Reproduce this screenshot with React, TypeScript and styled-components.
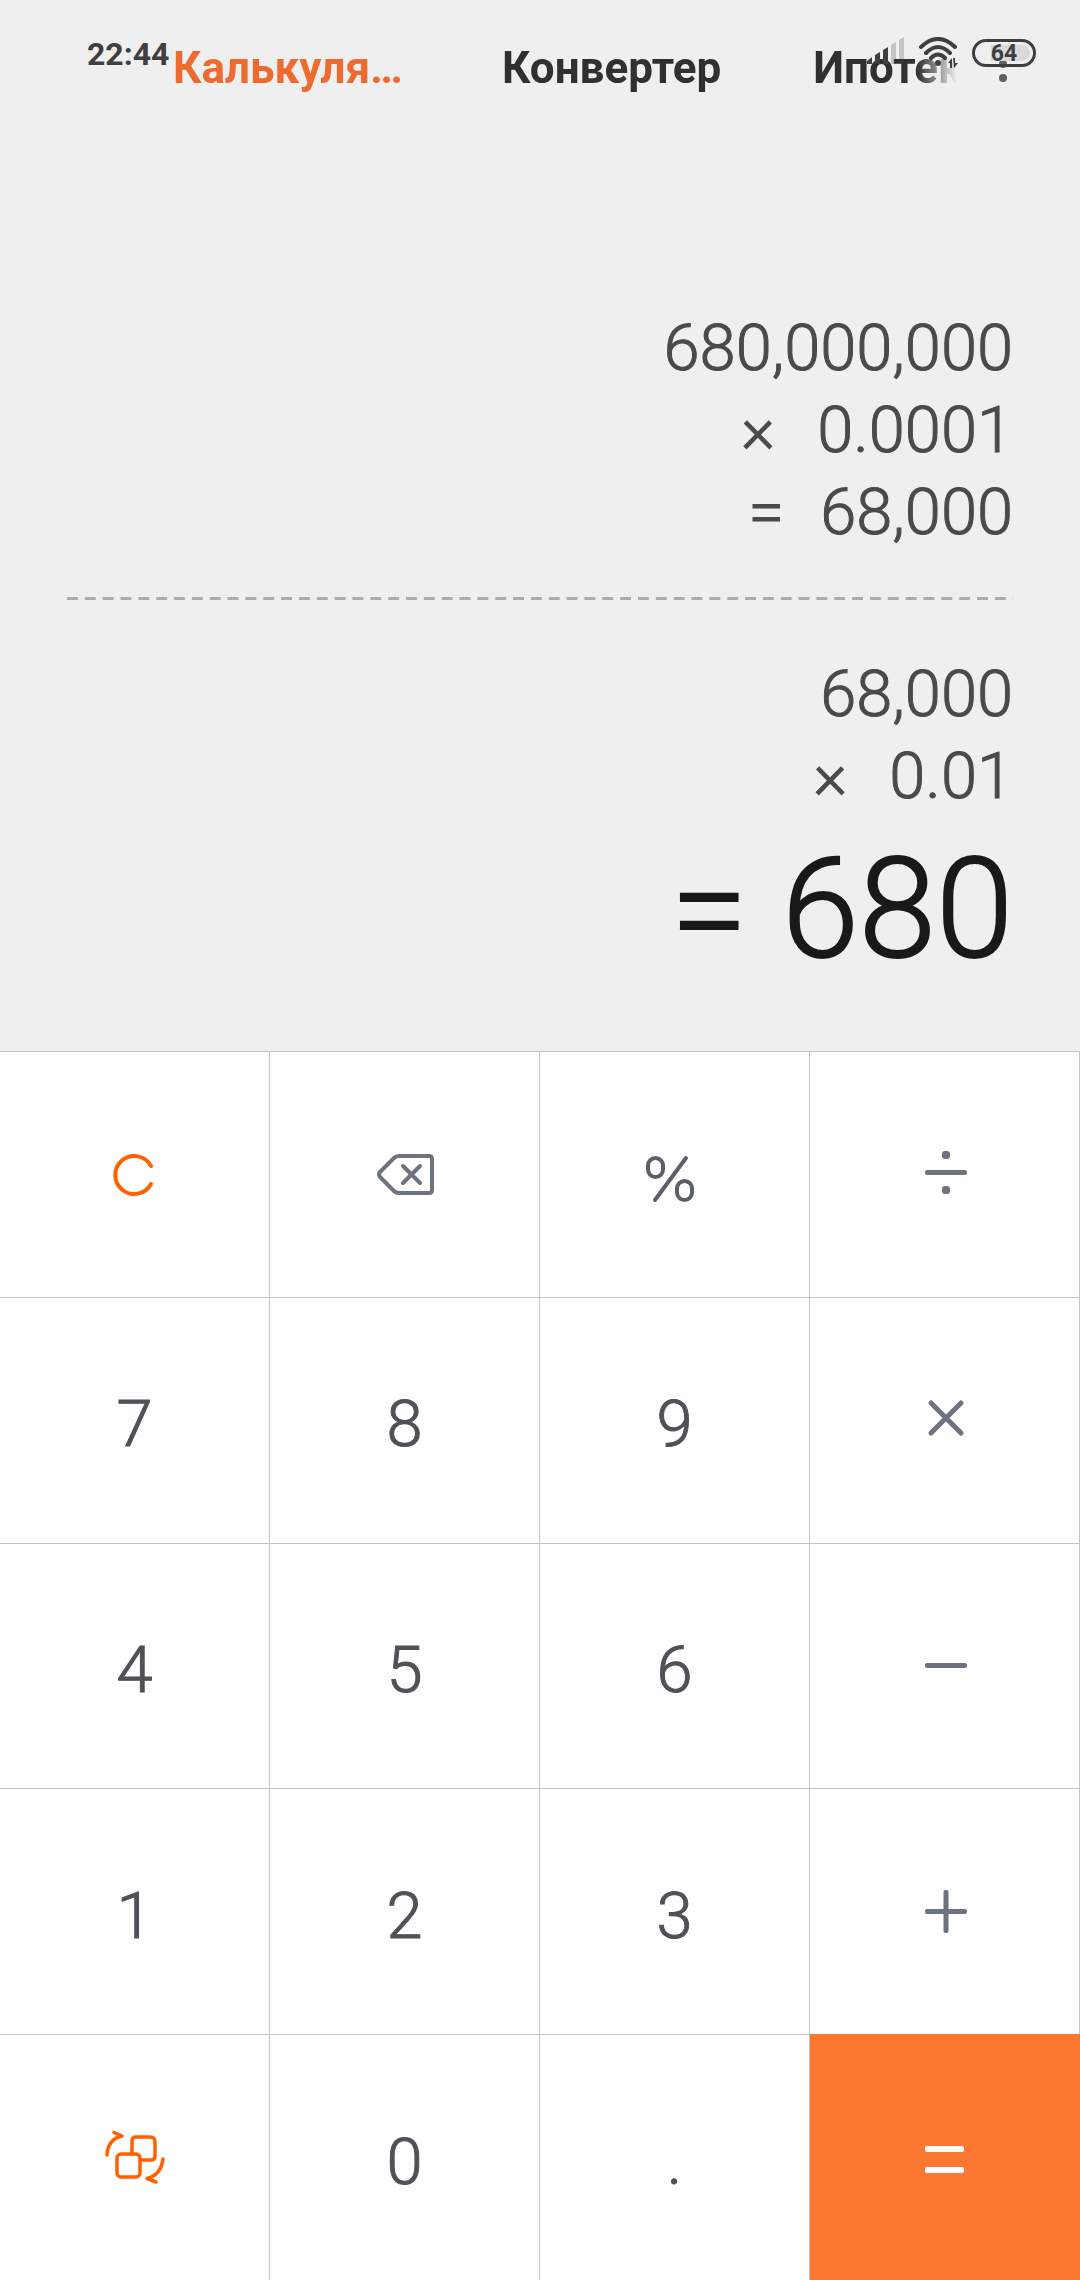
import React from 'react';
import styled, { createGlobalStyle } from 'styled-components';

const GlobalStyle = createGlobalStyle`
  * { box-sizing: border-box; }
  body { margin: 0; background: #efefef; font-family: Roboto, sans-serif; }
`;

const Screen = styled.div`
  position: relative;
  display: flex;
  flex-direction: column;
  min-height: 100vh;
  background: #efefef;
`;

const StatusBar = styled.div`
  position: absolute;
  z-index: 1;
  inset: 0 0 auto 0;
  display: flex;
  align-items: center;
  height: 106px;
  padding: 0 44px 0 87px;
  pointer-events: none;
`;

const Clock = styled.time`
  margin-right: auto;
  padding-top: 2px;
  font-size: 32px;
  line-height: 40px;
  font-weight: 700;
  color: #3f3f3f;
`;

const StatusIcons = styled.div`
  display: flex;
  align-items: center;
  gap: 14px;
`;

const Battery = styled.div`
  position: relative;
  display: flex;
  align-items: center;
  justify-content: center;
  width: 64px;
  height: 28px;
  padding-top: 1px;
  border: 3px solid #3f3f3f;
  border-radius: 14px;
  font-size: 23px;
  line-height: 24px;
  font-weight: 700;
  color: #3f3f3f;

  &::before {
    content: '';
    position: absolute;
    z-index: -1;
    inset: 3px 3px 3px 16px;
    border-radius: 0 8px 8px 0;
    background: #d9d9d9;
  }
`;

const Header = styled.header`
  display: flex;
  align-items: center;
  height: 136px;
  padding: 0 57px 0 173px;
`;

const Tabs = styled.nav`
  display: flex;
  flex: 1;
  min-width: 0;
  gap: 92px;
  overflow: hidden;
  mask-image: linear-gradient(to right, #000 calc(100% - 40px), transparent);
`;

const Tab = styled.button<{ $active?: boolean }>`
  flex: none;
  max-width: 237px;
  padding: 0;
  border: 0;
  background: none;
  overflow: hidden;
  text-overflow: ellipsis;
  white-space: nowrap;
  text-align: left;
  font: 700 44px/56px Roboto, sans-serif;
  color: ${(p) => (p.$active ? '#ef6a2e' : '#303030')};
`;

const MenuButton = styled.button`
  display: flex;
  flex-direction: column;
  align-items: center;
  gap: 6px;
  width: 40px;
  margin-left: 26px;
  padding: 0 0 8px;
  border: 0;
  background: none;
`;

const MenuDot = styled.span`
  width: 8px;
  height: 8px;
  border-radius: 50%;
  background: #606060;
`;

const Display = styled.main`
  display: flex;
  flex-direction: column;
  align-items: flex-end;
  padding: 171px 67px 57px;
`;

const Line = styled.div<{ $gap?: number }>`
  display: flex;
  gap: ${(p) => p.$gap ?? 0}px;
  font-size: 65px;
  line-height: 82px;
  font-weight: 300;
  color: #4a4a4a;
  -webkit-text-stroke: 1px currentColor;
`;

const Divider = styled.hr`
  align-self: stretch;
  height: 3px;
  margin: 44px 0 53px;
  border: 0;
  background: linear-gradient(to right, #ababab 11px, transparent 11px) 0 0 / 18px 3px round;
`;

const Result = styled.output`
  display: flex;
  gap: 34px;
  padding-top: 9px;
  font-size: 139px;
  line-height: 168px;
  font-weight: 300;
  color: #191919;
  -webkit-text-stroke: 2px currentColor;
`;

const Keypad = styled.div`
  display: grid;
  flex: 1;
  grid-template-columns: repeat(4, 1fr);
  grid-auto-rows: minmax(120px, 1fr);
  background: #fefefe;
`;

const Key = styled.button<{ $tone?: string; $primary?: boolean }>`
  display: flex;
  align-items: center;
  justify-content: center;
  padding: ${(p) => (p.$primary ? '1px 1px 0 0' : '0')};
  border: solid #c4c4c4;
  border-width: ${(p) => (p.$primary ? '0' : '1px 1px 0 0')};
  border-radius: 0;
  background: ${(p) => (p.$primary ? '#fc772f' : '#fefefe')};
  color: ${(p) => p.$tone ?? '#505157'};
`;

const Digit = styled.span`
  padding-top: 8px;
  font: 300 65px/80px Roboto, sans-serif;
  -webkit-text-stroke: 1px currentColor;
`;

const Icon = ({ children }: { children: React.ReactNode }) => (
  <svg width="72" height="72" viewBox="0 0 72 72" fill="none" stroke="currentColor" strokeWidth="4" strokeLinecap="round" strokeLinejoin="round" aria-hidden="true">
    {children}
  </svg>
);

const icons = {
  clear: <path d="M52 28A19 19 0 1 0 52 46" />,
  backspace: (
    <>
      <path d="M30 18H60Q63 18 63 21V52Q63 55 60 55H30Q27 55 25 53L11 39Q9 36.500 11 34L25 20Q27 18 30 18Z" />
      <path d="M34 28L51 45M51 28L34 45" />
    </>
  ),
  percent: (
    <>
      <rect x="9" y="20" width="15" height="19" rx="7.5" />
      <rect x="38" y="43" width="15" height="19" rx="7.5" />
      <path d="M47 20L16 62" />
    </>
  ),
  divide: (
    <g fill="currentColor" stroke="none">
      <rect x="16" y="32" width="42" height="5" rx="2" />
      <rect x="33" y="13" width="8" height="8" rx="3" />
      <rect x="33" y="48" width="8" height="8" rx="3" />
    </g>
  ),
  multiply: <path strokeWidth="5" d="M22 19L52 49M52 19L22 49" />,
  minus: <rect x="16" y="33" width="42" height="5" rx="2" fill="currentColor" stroke="none" />,
  plus: (
    <g fill="currentColor" stroke="none">
      <rect x="16" y="33" width="42" height="5" rx="2" />
      <rect x="34.5" y="14" width="5" height="43" rx="2" />
    </g>
  ),
  equals: (
    <g fill="currentColor" stroke="none">
      <rect x="16" y="24" width="39" height="6" rx="2" />
      <rect x="16" y="45" width="39" height="6" rx="2" />
    </g>
  ),
  swap: (
    <g strokeWidth="3.5">
      <rect x="18" y="32" width="23" height="23" rx="4" />
      <path d="M33 32V19Q33 15 37 15H51Q56 15 56 20V34Q56 38 52 38H42" />
      <path d="M8 33Q9 17 23 14L15 10.500" />
      <path d="M64 37Q62 53 48 56.500L57 60" />
    </g>
  ),
};

const ORANGE = '#ff6000';
const SLATE = '#6e7380';

type KeyDef = { label: string; icon?: keyof typeof icons; tone?: string; primary?: boolean };

const keys: KeyDef[] = [
  { label: 'Сброс', icon: 'clear', tone: ORANGE },
  { label: 'Удалить', icon: 'backspace', tone: SLATE },
  { label: 'Процент', icon: 'percent', tone: '#59606a' },
  { label: 'Разделить', icon: 'divide', tone: SLATE },
  { label: '7' }, { label: '8' }, { label: '9' },
  { label: 'Умножить', icon: 'multiply', tone: SLATE },
  { label: '4' }, { label: '5' }, { label: '6' },
  { label: 'Вычесть', icon: 'minus', tone: SLATE },
  { label: '1' }, { label: '2' }, { label: '3' },
  { label: 'Сложить', icon: 'plus', tone: SLATE },
  { label: 'Переключить режим', icon: 'swap', tone: ORANGE },
  { label: '0' }, { label: '.' },
  { label: 'Равно', icon: 'equals', tone: '#ffffff', primary: true },
];

const StatusGlyphs = () => (
  <svg width="91" height="32" viewBox="0 0 91 32" fill="none" aria-hidden="true">
    <g fill="#3f3f3f">
      <path d="M0 27V24L5 20V27ZM8 27V18L13 15V27ZM16 27V13L21 10V27Z" />
      <path opacity="0.25" d="M24 27V8L29 5V27ZM32 27V3L37 0V27Z" />
      <circle cx="71" cy="26" r="3" />
      <path d="M81 26L85 21V31H83V26ZM86 21H88V26H91L87 31Z" />
    </g>
    <path
      d="M54 10Q71 -6 88 10M59 16Q71 4 83 16M64 21Q71 14 78 21"
      stroke="#3f3f3f"
      strokeWidth="4"
      strokeLinecap="round"
    />
  </svg>
);

export default function App() {
  return (
    <Screen>
      <GlobalStyle />
      <StatusBar>
        <Clock>22:44</Clock>
        <StatusIcons>
          <StatusGlyphs />
          <Battery>64</Battery>
        </StatusIcons>
      </StatusBar>
      <Header>
        <Tabs>
          <Tab $active>Калькулятор</Tab>
          <Tab>Конвертер</Tab>
          <Tab>Ипотека</Tab>
        </Tabs>
        <MenuButton aria-label="Меню">
          <MenuDot /><MenuDot /><MenuDot />
        </MenuButton>
      </Header>
      <Display>
        <Line>680,000,000</Line>
        <Line $gap={42}><span>×</span><span>0.0001</span></Line>
        <Line $gap={36}><span>=</span><span>68,000</span></Line>
        <Divider />
        <Line>68,000</Line>
        <Line $gap={42}><span>×</span><span>0.01</span></Line>
        <Result><span>=</span><span>680</span></Result>
      </Display>
      <Keypad>
        {keys.map((k) => (
          <Key key={k.label} $tone={k.tone} $primary={k.primary} aria-label={k.icon && k.label}>
            {k.icon ? <Icon>{icons[k.icon]}</Icon> : <Digit>{k.label}</Digit>}
          </Key>
        ))}
      </Keypad>
    </Screen>
  );
}
